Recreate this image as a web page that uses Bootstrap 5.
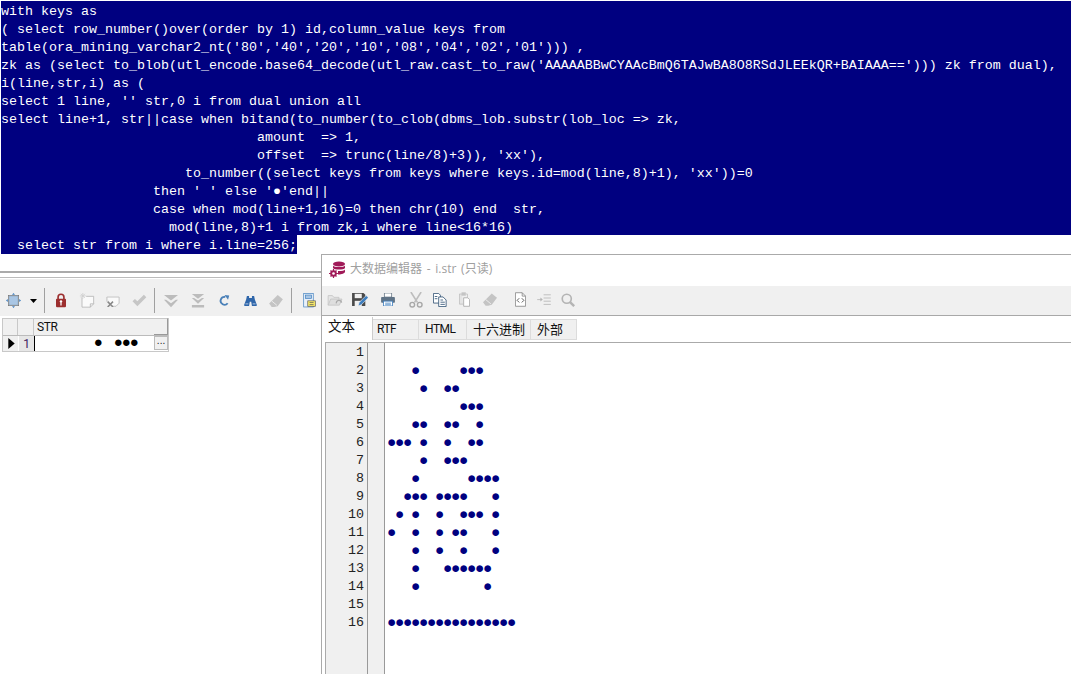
<!DOCTYPE html>
<html lang="zh">
<head>
<meta charset="utf-8">
<title>大数据编辑器</title>
<link rel="stylesheet" href="https://cdn.jsdelivr.net/npm/bootstrap@5.3.0/dist/css/bootstrap.min.css">
<style>
html,body{height:674px;overflow:hidden;background:#fff;margin:0}
.sql-block{height:254px;padding:1px 0 0 1px;font:13.33px/18px "Liberation Mono",monospace;color:#fff;white-space:pre}
.sql-line{background:#000080;height:18px;overflow:hidden;padding-top:2px}
.sql-line.sql-last{width:296px;height:19px}
.lower-area{height:420px}
.left-pane{width:321px;padding-top:17px;overflow:hidden}
.pane-rules{height:7px;border-top:2px solid #aaa;border-bottom:1px solid #bbb;margin-top:0;width:100%}
.left-tools{height:37px;padding-top:6px;background:#f0f0f0;margin-top:1px;display:grid;grid-template-columns:26px 14px 8px 26px 26px 26px 26px 4px 30px 24px 28px 24px 28px 2px 34px;align-items:center;justify-items:center}
.tool-sep{width:1px;height:25px;background:#a0a0a0}
.data-grid{width:167px;margin:2px 0 0 2px;border:1px solid #c8c8c8;border-top:0;font:12px/16px Roboto,sans-serif;letter-spacing:-.4px}
.grid-row{height:17px}
.grid-row + .grid-row{height:16px}
.cell-a{width:15px;border-right:1px solid #c8c8c8;background:#f0f0f0;border-top:1px solid #c8c8c8}
.cell-b{width:16px;border-right:1px solid #c8c8c8;background:#f0f0f0;border-top:1px solid #c8c8c8}
.cell-c{width:120px;background:#f0f0f0;padding-left:3px;border-top:1px solid #c8c8c8;color:#111}
.cell-d{width:14px;background:#f0f0f0;border-top:1px solid #c8c8c8;border-right:1px solid #999;border-bottom:1px solid #999}
.grid-row.grid-data{border-top:1px solid #bbb}
.grid-data .cell-a{background:#f0f0f0;border-top:0;border-right:0;display:flex;align-items:center;justify-content:center;padding-left:2px}
.grid-data .cell-b{background:#e6e6e6;border-top:0;border-right:1px solid #000;text-align:center;color:#402060;margin-left:1px;width:16px}
.grid-data .cell-c{background:#fff;border-top:0;padding-left:0;display:flex;align-items:center;font:15px/15px "Liberation Mono",monospace;letter-spacing:-1px;color:#000;white-space:pre}
.dot-run{margin-left:59px}
.dot-run2{margin-left:12px}
.cell-more{width:14px;height:14px;background:#f0f0f0;border:1px solid #bbb;font:10px/8px "Liberation Sans",sans-serif;text-align:center;color:#222;letter-spacing:0}
.blob-window{width:750px;border-top:1px solid #aaa;border-left:1px solid #aaa;background:#fff}
.blob-title{height:31px;padding:0 0 3px 7px;gap:4px;font:12px/28px "Open Sans","Noto Sans CJK SC",sans-serif;word-spacing:1.6px;color:#a0a0a0;white-space:pre}
.blob-tools{height:27px;padding-bottom:2px;background:#f0f0f0;border-bottom:1px solid #a8a8a8;box-sizing:content-box;display:grid;grid-template-columns:26px 24px 32px 24px 24px 24px 28px 32px 16px 32px;align-items:center;justify-items:center;justify-content:start}
.tab-strip{height:26px;padding-top:1px;background:#fff;flex-wrap:nowrap}
.tab-strip .tab-item{height:21px;margin-top:2px;background:#f0f0f0;border:1px solid #dcdcdc;border-left:0;font:12px/18px Roboto,"Noto Sans CJK SC",sans-serif;letter-spacing:-.5px;color:#111;text-align:left}
.tab-strip .tab-on{height:23px;margin-top:0;background:#fff;border:0;width:51px;font:13.5px/17px "Noto Sans CJK SC",sans-serif;letter-spacing:0;border-right:1px solid #ccc;padding-left:6px}
.tab-w1{width:46px;padding-left:4px}
.tab-w2{width:48px;padding-left:6px}
.tab-w3{width:64px;padding-left:6px}
.tab-w4{width:46px;padding-left:6px}
.tab-strip .tab-w3,.tab-strip .tab-w4{font:13px/18px "Noto Sans CJK SC",sans-serif;letter-spacing:0}
.edit-box{margin-left:3px;border-top:1px solid #aaa;border-left:1px solid #aaa;height:332px;font:13.33px/18px "Liberation Mono",monospace}
.gutter-nums{width:42px;background:#f0f0f0;border-right:1px solid #999;text-align:right;padding:0 3px 0 0;color:#222}
.gutter-mark{width:17px;background:#f0f0f0;border-right:1px solid #999}
.edit-text{padding:0 0 0 2px;color:#000080;white-space:pre;font:15.5px/18px "Liberation Mono","DejaVu Sans Mono",monospace;letter-spacing:-1.3px}
.edit-text div,.gutter-nums div{height:18px}
.edit-text div{padding-top:1px}
.gutter-nums div{padding-top:1px;line-height:17px}
</style>
</head>
<body>
<pre class="sql-block m-0"><div class="sql-line">with keys as</div><div class="sql-line">( select row_number()over(order by 1) id,column_value keys from</div><div class="sql-line">table(ora_mining_varchar2_nt('80','40','20','10','08','04','02','01'))) ,</div><div class="sql-line">zk as (select to_blob(utl_encode.base64_decode(utl_raw.cast_to_raw('AAAAABBwCYAAcBmQ6TAJwBA8O8RSdJLEEkQR+BAIAAA=='))) zk from dual),</div><div class="sql-line">i(line,str,i) as (</div><div class="sql-line">select 1 line, '' str,0 i from dual union all</div><div class="sql-line">select line+1, str||case when bitand(to_number(to_clob(dbms_lob.substr(lob_loc => zk,</div><div class="sql-line">                                amount  => 1,</div><div class="sql-line">                                offset  => trunc(line/8)+3)), 'xx'),</div><div class="sql-line">                       to_number((select keys from keys where keys.id=mod(line,8)+1), 'xx'))=0</div><div class="sql-line">                   then ' ' else '●'end||</div><div class="sql-line">                   case when mod(line+1,16)=0 then chr(10) end  str,</div><div class="sql-line">                     mod(line,8)+1 i from zk,i where line&lt;16*16)</div><div class="sql-line sql-last">  select str from i where i.line=256;</div></pre>

<div class="lower-area d-flex">
  <section class="left-pane">
    <div class="pane-rules"></div>
    <div class="left-tools">
      <svg width="15" height="15" viewBox="0 0 15 15"><path d="M2 2.500h11M2 12.500h11M2.500 2v11M12.500 2v11" stroke="#777" fill="none" stroke-width=".8"/><rect x="3" y="3" width="9" height="9" fill="#a9c6e4" stroke="#8aa0b5" stroke-width=".5"/><path d="M7.500 0l1.500 1.800H6zM7.500 15L9 13.200H6zM0 7.500l1.800-1.500v3zM15 7.500l-1.800-1.500v3z" fill="#3f7fbf"/></svg>
      <svg width="7" height="4" viewBox="0 0 7 4"><path d="M0 0h7L3.500 4z" fill="#000"/></svg>
      <span class="tool-sep"></span>
      <svg width="12" height="15" viewBox="0 0 14 18"><path d="M3.500 8V5a3.500 3.500 0 0 1 7 0v3" fill="none" stroke="#9c2f2f" stroke-width="2"/><rect x="1" y="7" width="12" height="10" rx="1" fill="#9c2f2f"/><path d="M7 10v5" stroke="#fff" stroke-width="1.500"/><circle cx="7" cy="10" r="1.400" fill="#fff"/></svg>
      <svg width="16" height="15" viewBox="0 0 18 18"><path d="M3 6v11h10l4-4V4H8" fill="#fafafa" stroke="#b5b5b5"/><path d="M13 17v-4h4" fill="none" stroke="#b5b5b5"/><path d="M4 0v7M.500 3.500h7M1.500 1l5 5M6.500 1l-5 5" stroke="#cfcfcf"/></svg>
      <svg width="16" height="13" viewBox="0 0 18 17"><path d="M1 4h16v8l-4 4H8" fill="#fafafa" stroke="#b5b5b5"/><path d="M1 4v6" stroke="#b5b5b5"/><path d="M2 10l7 7M9 10l-7 7" stroke="#888" stroke-width="2"/></svg>
      <svg width="16" height="13" viewBox="0 0 18 16"><path d="M1 9l3-3 3 3 8-8 3 3L7 15z" fill="#c6c6c6"/></svg>
      <span class="tool-sep"></span>
      <svg width="14" height="14" viewBox="0 0 16 16"><path d="M0 1h16L8 7.500zM0 6.500h2.500L8 10.500l5.500-4H16L8 15z" fill="#bcbcbc"/></svg>
      <svg width="14" height="14" viewBox="0 0 16 16"><path d="M1 0h14L8 5.500zM1 4.500h2.500L8 7.500l4.500-3H15L8 11zM1 12.500h14V15.500H1z" fill="#bcbcbc"/></svg>
      <svg width="11" height="11" viewBox="0 0 14 14"><path d="M11 10.500A5 5 0 1 1 8 2.500" fill="none" stroke="#4a80b8" stroke-width="2.400"/><path d="M7 0l6 .5-1.500 5.500z" fill="#4a80b8"/></svg>
      <svg width="13" height="12" viewBox="0 0 18 16"><path d="M4 1h3v3h4V1h3l1 5 3 8-1 1h-6l-1-6H8l-1 6H1l-1-1 3-8z" fill="#2f66aa"/><path d="M2 12h4M12 12h4" stroke="#dbe7f4"/></svg>
      <svg width="14" height="12" viewBox="0 0 16 14"><path d="M10 0l6 5-6 8-4 1H3L0 10z" fill="#c4c4c4"/><path d="M3 7l6 5" stroke="#f0f0f0"/></svg>
      <span class="tool-sep"></span>
      <svg width="13" height="15" viewBox="0 0 18 22"><rect x=".5" y=".5" width="14" height="20" fill="#eaf1f9" stroke="#3f7fbf"/><rect x="3" y="3" width="9" height="5" fill="#a9c6e4" stroke="#3f7fbf"/><rect x="6.500" y="11.500" width="11" height="8" fill="#f7e96a" stroke="#555"/><path d="M9 14h6M9 17h6" stroke="#555"/></svg>
    </div>
    <div class="data-grid">
      <div class="grid-row d-flex">
        <div class="cell-a"></div><div class="cell-b"></div><div class="cell-c">STR</div><div class="cell-d"></div>
      </div>
      <div class="grid-row grid-data d-flex">
        <div class="cell-a"><svg width="7" height="11" viewBox="0 0 7 12"><path d="M0 0l7 6-7 6z" fill="#000"/></svg></div>
        <div class="cell-b">1</div>
        <div class="cell-c"><span class="dot-run">●</span><span class="dot-run2">●●●</span></div>
        <div class="cell-more">...</div>
      </div>
    </div>
  </section>

  <section class="blob-window">
    <div class="blob-title d-flex align-items-center">
      <svg width="17" height="17" viewBox="0 0 17 17"><ellipse cx="10" cy="3" rx="6" ry="2.500" fill="#a01a58"/><path d="M4 4.500c1 2 11 2 12 0v2.500c-1 2-11 2-12 0zM4 8.500c1 2 11 2 12 0V11c-1 2-5 2.500-7 2.500V10c-2 0-4-.5-5-1.500z" fill="#a01a58"/><circle cx="4.500" cy="12.500" r="3.300" fill="#a01a58"/><path d="M4.500 8v9M0 12.500h9M1.500 9.500l6 6M7.500 9.500l-6 6" stroke="#a01a58" stroke-width="1.200"/><circle cx="4.500" cy="12.500" r="1.300" fill="#fff"/></svg>
      <span>大数据编辑器 - i.str (只读)</span>
    </div>
    <div class="blob-tools">
      <svg width="17" height="13" viewBox="0 0 18 15"><path d="M.5 14V3h5l1.500 2h6v2" fill="#e6e6e6" stroke="#c6c6c6"/><path d="M.5 14l3-7h13l-3 7z" fill="#dedede" stroke="#c6c6c6"/><path d="M10 12a3 3 0 0 1 6-1" fill="none" stroke="#aaa" stroke-width="1.500"/></svg>
      <svg width="16" height="15" viewBox="0 0 18 17"><path d="M0 1h13l2 2v13H0z" fill="#4a4a4a"/><rect x="3" y="2" width="8" height="5" fill="#f0f0f0"/><rect x="3" y="10" width="8" height="6" fill="#f0f0f0"/><path d="M7 16l1-4 8-8 2.500 2.500-8 8z" fill="#3f7fbf" stroke="#f0f0f0" stroke-width=".7"/></svg>
      <svg width="14" height="13" viewBox="0 0 17 16"><rect x="4" y="0" width="9" height="5" fill="#fff" stroke="#6a7a88"/><rect x="0" y="5" width="17" height="7" rx="1" fill="#5f7386"/><rect x="3" y="10" width="11" height="6" fill="#fff" stroke="#3f7fbf"/><path d="M5 12.500h7M5 14.500h7" stroke="#3f7fbf"/></svg>
      <svg width="14" height="16" viewBox="0 0 15 17"><path d="M2 0l7 11M13 0L6 11" stroke="#bdbdbd" stroke-width="1.800"/><circle cx="3.500" cy="13.500" r="2.500" fill="none" stroke="#a8a8a8" stroke-width="1.500"/><circle cx="11.500" cy="13.500" r="2.500" fill="none" stroke="#a8a8a8" stroke-width="1.500"/></svg>
      <svg width="14" height="14" viewBox="0 0 16 16"><path d="M.5.5h6l2 2v9H.5z" fill="#fff" stroke="#3a5a7a"/><path d="M6.500 4.500h5l3.500 3.500v7.500H6.500z" fill="#fff" stroke="#3a5a7a"/><path d="M8.500 8h3M8.500 10.500h5M8.500 13h5M2 4h3M2 6.500h3" stroke="#3a5a7a"/></svg>
      <svg width="11" height="15" viewBox="0 0 13 17"><path d="M3.500 2h-3v12H5" fill="#e4e4e4" stroke="#c0c0c0"/><rect x="3" y="0" width="5" height="4" fill="#c4c4c4"/><path d="M8 2h2v4" fill="none" stroke="#c0c0c0"/><path d="M5.500 6.500h5l2 2v8h-7z" fill="#fff" stroke="#a8a8a8"/></svg>
      <svg width="14" height="13" viewBox="0 0 16 14"><path d="M10 0l6 5-6 8-4 1H3L0 10z" fill="#c4c4c4"/><path d="M3 7l6 5" stroke="#f0f0f0"/></svg>
      <svg width="11" height="15" viewBox="0 0 13 17"><path d="M.5.5h8l4 4v12H.5z" fill="#fff" stroke="#888"/><path d="M8.500.5v4h4" fill="none" stroke="#888"/><path d="M5 7L2.500 9.500 5 12M8 7l2.500 2.500L8 12" fill="none" stroke="#444"/></svg>
      <svg width="14" height="12" viewBox="0 0 17 15"><path d="M8 1h9M8 5h9M8 9h9M8 13h9" stroke="#b4b4b4"/><path d="M0 7h5" stroke="#b4b4b4"/><path d="M7 7L4 4.500v5z" fill="#b4b4b4"/></svg>
      <svg width="14" height="14" viewBox="0 0 17 17"><circle cx="7" cy="7" r="5.500" fill="none" stroke="#b4b4b4" stroke-width="2"/><path d="M11 11l5 5" stroke="#b4b4b4" stroke-width="3"/></svg>
    </div>
    <div class="tab-strip d-flex">
      <div class="tab-item tab-on">文本</div>
      <div class="tab-item tab-w1">RTF</div>
      <div class="tab-item tab-w2">HTML</div>
      <div class="tab-item tab-w3">十六进制</div>
      <div class="tab-item tab-w4">外部</div>
    </div>
    <div class="edit-box d-flex">
      <div class="gutter-nums"><div>1</div><div>2</div><div>3</div><div>4</div><div>5</div><div>6</div><div>7</div><div>8</div><div>9</div><div>10</div><div>11</div><div>12</div><div>13</div><div>14</div><div>15</div><div>16</div></div>
      <div class="gutter-mark"></div>
      <div class="edit-text"><div></div><div>   ●     ●●●</div><div>    ●  ●●</div><div>         ●●●</div><div>   ●●  ●●  ●</div><div>●●● ●  ●  ●●</div><div>    ●  ●●●</div><div>   ●      ●●●●</div><div>  ●●● ●●●●   ●</div><div> ● ●  ●  ●●● ●</div><div>●  ●  ● ●●   ●</div><div>   ●  ●  ●   ●</div><div>   ●   ●●●●●●</div><div>   ●        ●</div><div></div><div>●●●●●●●●●●●●●●●●</div></div>
    </div>
  </section>
</div>
</body>
</html>
